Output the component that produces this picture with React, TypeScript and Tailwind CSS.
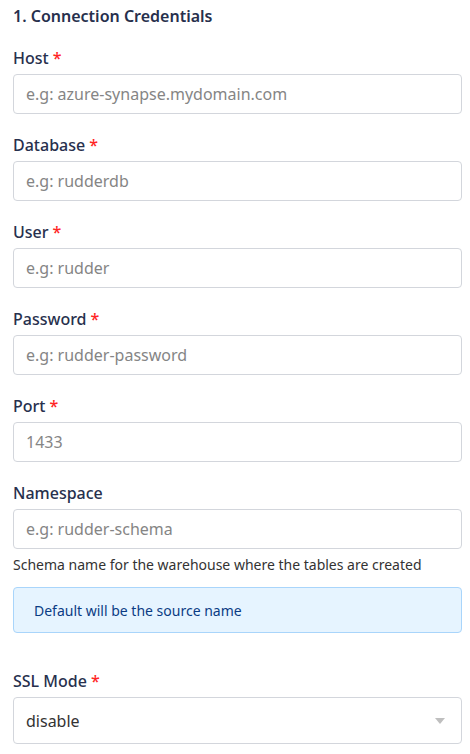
const fields = [
  { label: "Host", required: true, placeholder: "e.g: azure-synapse.mydomain.com" },
  { label: "Database", required: true, placeholder: "e.g: rudderdb" },
  { label: "User", required: true, placeholder: "e.g: rudder" },
  { label: "Password", required: true, placeholder: "e.g: rudder-password" },
  { label: "Port", required: true, placeholder: "", value: "1433" },
];

function Label({ text, required }: { text: string; required?: boolean }) {
  return (
    <div className="text-[16px] leading-6 font-medium text-[#27304d] mb-1">
      {text}
      {required && <span className="text-[#ff2525] ml-1">*</span>}
    </div>
  );
}

export default function App() {
  return (
    <main className="min-h-screen bg-white px-[13px] pt-1 font-['Noto_Sans',sans-serif] w-[470px]">
      <h1 className="text-[16px] leading-6 font-semibold text-[#27304d] mb-[18px]">1. Connection Credentials</h1>

      {fields.map((f) => (
        <div key={f.label} className="mb-[19px] w-[449px]">
          <Label text={f.label} required={f.required} />
          <div className="h-10 border border-[#d3d6dc] rounded flex items-center px-3 text-[16px] text-[#858585]">
            {f.value ?? f.placeholder}
          </div>
        </div>
      ))}

      <div className="w-[449px]">
        <Label text="Namespace" />
        <div className="h-10 border border-[#d3d6dc] rounded flex items-center px-3 text-[16px] text-[#858585]">
          e.g: rudder-schema
        </div>
        <p className="text-[14px] leading-5 text-[#333333] mt-[6px]">
          Schema name for the warehouse where the tables are created
        </p>
        <div className="mt-[12px] h-[46px] bg-[#e6f4ff] border border-[#a9d5fb] rounded flex items-center px-5 text-[14px] text-[#0b3c84]">
          Default will be the source name
        </div>
      </div>

      <div className="w-[449px] mt-[36px]">
        <Label text="SSL Mode" required />
        <div className="h-[47px] border border-[#d3d6dc] rounded flex items-center justify-between pl-3 pr-[16px] text-[16px] text-[#333333]">
          <span>disable</span>
          <svg width="10" height="6" viewBox="0 0 10 6">
            <path d="M0 0 L10 0 L5 6 Z" fill="#bfbfbf" />
          </svg>
        </div>
      </div>
    </main>
  );
}
